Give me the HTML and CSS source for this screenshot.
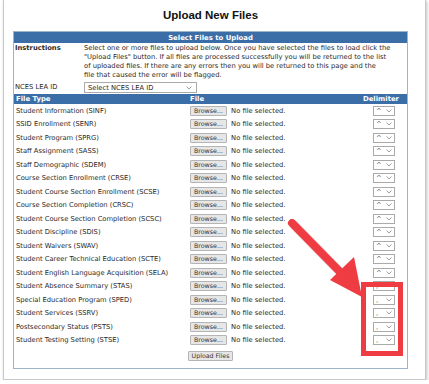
FILE: index.html
```html
<!DOCTYPE html>
<html lang="en">
<head>
    <meta charset="UTF-8">
    <title>Upload New Files</title>
    <link rel="stylesheet" href="styles.css">
</head>
<body>
    <div class="frame">
        <h1>Upload New Files</h1>
        <table class="upload">
            <tr><th colspan="3" class="caption">Select Files to Upload</th></tr>
            <tr>
                <td colspan="3" class="intro">
                    <div class="intro-row">
                        <span class="intro-label bold">Instructions</span>
                        <span class="intro-text">Select one or more files to upload below. Once you have selected the files to load click the "Upload Files" button. If all files are processed successfully you will be returned to the list<br>of uploaded files. If there are any errors then you will be returned to this page and the<br>file that caused the error will be flagged.</span>
                    </div>
                    <div class="intro-row lea">
                        <span class="intro-label">NCES LEA ID</span>
                        <span class="lea-select">Select NCES LEA ID
                            <svg width="6" height="4" viewBox="0 0 6 4"><path d="M0.5 0.5 L3 3 L5.5 0.5" fill="none" stroke="#888" stroke-width="0.8"/></svg>
                        </span>
                    </div>
                </td>
            </tr>
            <tr class="cols">
                <th class="col-type">File Type</th>
                <th class="col-file">File</th>
                <th class="col-delim">Delimiter</th>
            </tr>
            <tbody id="file-rows"></tbody>
            <tr class="submit-row">
                <td colspan="3"><button class="btn">Upload Files</button></td>
            </tr>
        </table>
        <div class="highlight"></div>
        <svg class="arrow" width="90" height="90" viewBox="0 0 90 90">
            <path d="M6 4 L61 60" stroke="#b02a2a" stroke-opacity="0.25" stroke-width="9" stroke-linecap="round" transform="translate(1.5,1.5)"/>
            <path d="M6 4 L61 60" stroke="#ef3b42" stroke-width="8" stroke-linecap="round"/>
            <polygon points="44,61 68,38 76,78" fill="#ef3b42"/>
        </svg>
    </div>
    <script>
        var files = [
            ['Student Information (SINF)', '^'],
            ['SSID Enrollment (SENR)', '^'],
            ['Student Program (SPRG)', '^'],
            ['Staff Assignment (SASS)', '^'],
            ['Staff Demographic (SDEM)', '^'],
            ['Course Section Enrollment (CRSE)', '^'],
            ['Student Course Section Enrollment (SCSE)', '^'],
            ['Course Section Completion (CRSC)', '^'],
            ['Student Course Section Completion (SCSC)', '^'],
            ['Student Discipline (SDIS)', '^'],
            ['Student Waivers (SWAV)', '^'],
            ['Student Career Technical Education (SCTE)', '^'],
            ['Student English Language Acquisition (SELA)', '^'],
            ['Student Absence Summary (STAS)', ','],
            ['Special Education Program (SPED)', ','],
            ['Student Services (SSRV)', ','],
            ['Postsecondary Status (PSTS)', ','],
            ['Student Testing Setting (STSE)', ',']
        ];
        var tbody = document.getElementById('file-rows');
        files.forEach(function (f) {
            var row = document.createElement('tr');
            row.className = 'file-row';
            row.innerHTML = '<td>' + f[0] + '</td>' +
                '<td><button class="btn">Browse...</button> <span class="none">No file selected.</span></td>' +
                '<td class="col-delim"><span class="delim"><span class="delim-val">' + f[1] + '</span>' +
                '<svg width="6" height="4" viewBox="0 0 6 4"><path d="M0.5 0.5 L3 3 L5.5 0.5" fill="none" stroke="#888" stroke-width="0.8"/></svg></span></td>';
            tbody.appendChild(row);
        });
    </script>
</body>
</html>
```

FILE: styles.css
```css
body {
    margin: 0;
    background-color: #fff;
    font-family: "DejaVu Sans", Verdana, sans-serif;
    color: #2a2a2a;
}
.frame {
    position: relative;
    margin: 0 3px 0 3px;
    height: 380px;
    box-sizing: border-box;
    border: 1px solid #c9c9c9;
    border-top: none;
    box-shadow: 1px 1px 3px rgba(0,0,0,0.25);
    padding: 0 0 0 9px;
}
h1 {
    width: 395px;
    margin: 0;
    padding-top: 9px;
    height: 31px;
    box-sizing: border-box;
    text-align: center;
    font-family: "Liberation Sans", Arial, sans-serif;
    font-size: 11.5px;
    font-weight: bold;
    color: #111;
}
.upload {
    width: 395px;
    border-collapse: collapse;
    border: 1px solid #9db2cc;
    font-size: 6.75px;
}
.upload th, .upload td {
    padding: 0 2px;
}
.caption, .cols th {
    background-color: #3b6ea6;
    color: #fff;
    font-weight: bold;
    font-size: 6.9px;
}
.caption {
    height: 11px;
    text-align: center;
}
.bold {
    font-weight: bold;
}
.intro {
    padding: 1px 0 0 0 !important;
}
.intro-row {
    display: flex;
    padding-left: 1px;
}
.intro-label {
    width: 69px;
    flex-shrink: 0;
    line-height: 9px;
}
.intro-text {
    line-height: 9px;
    padding-right: 9px;
}
.lea {
    align-items: center;
    height: 13px;
    margin-top: 1px;
}
.lea-select {
    display: flex;
    align-items: center;
    justify-content: space-between;
    width: 113px;
    height: 11px;
    box-sizing: border-box;
    border: 1px solid #aaa;
    padding: 0 4px 0 3px;
    background: #fff;
}
.cols th {
    height: 10px;
    text-align: left;
}
.col-type {
    width: 170px;
}
.upload .col-delim {
    text-align: right;
    padding-right: 12px;
}
.upload .cols .col-delim {
    padding-right: 8px;
}
.file-row td {
    height: 13.5px;
    white-space: nowrap;
}
.btn {
    font-family: "DejaVu Sans", Verdana, sans-serif;
    font-size: 6.3px;
    color: #333;
    background: #e6e6e6;
    border: 1px solid #b5b5b5;
    border-radius: 1px;
    height: 10px;
    padding: 0 3px;
    margin: 0;
    line-height: 8px;
    vertical-align: middle;
}
.none {
    margin-left: 2px;
    vertical-align: middle;
}
.delim {
    display: inline-flex;
    align-items: center;
    justify-content: space-between;
    width: 22px;
    height: 10px;
    box-sizing: border-box;
    border: 1px solid #aaa;
    padding: 0 2px 0 2px;
    vertical-align: middle;
    color: #666;
}
.submit-row td {
    text-align: center;
    height: 17px;
    padding-bottom: 4px;
}
.highlight {
    position: absolute;
    left: 357px;
    top: 282px;
    width: 42px;
    height: 74px;
    box-sizing: border-box;
    border: 5px solid #ef3b42;
}
.arrow {
    position: absolute;
    left: 282px;
    top: 219px;
}
```
